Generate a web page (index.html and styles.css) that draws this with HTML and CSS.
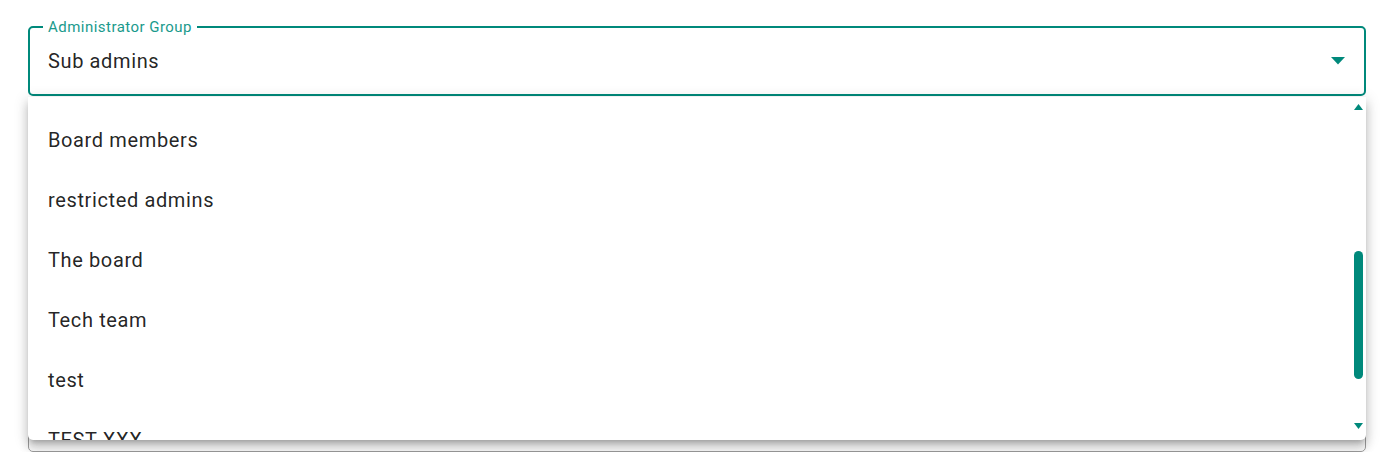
FILE: index.html
```html
<!DOCTYPE html>
<html lang="en">
<head>
<meta charset="utf-8"/>
<title>Administrator Group</title>
<link rel="stylesheet" href="styles.css">
</head>
<body>
<div class="form">
  <div class="field field-active">
    <span class="field-label">Administrator Group</span>
    <span class="field-value">Sub admins</span>
    <svg class="caret" width="14" height="8" viewBox="0 0 14 8"><path d="M0 0h14L7 7.5z" fill="#00897b"/></svg>
  </div>

  <div class="field field-idle"></div>

  <div class="menu">
    <ul class="menu-list">
      <li>Board members</li>
      <li>restricted admins</li>
      <li>The board</li>
      <li>Tech team</li>
      <li>test</li>
      <li>TEST XXX</li>
    </ul>
    <div class="scrollbar">
      <svg class="arrow" width="9" height="6" viewBox="0 0 9 6"><path d="M4.5 0L9 6H0z" fill="#00897b"/></svg>
      <div class="track"><div class="thumb"></div></div>
      <svg class="arrow" width="9" height="6" viewBox="0 0 9 6"><path d="M0 0h9L4.5 6z" fill="#00897b"/></svg>
    </div>
  </div>
</div>
</body>
</html>
```
FILE: styles.css
```css
body {
  margin: 0;
  font-family: Roboto, 'Liberation Sans', sans-serif;
  background-color: #fff;
  color: rgba(0, 0, 0, 0.87);
}
.form {
  position: relative;
  padding: 26px 25px 0 28px;
}
.field {
  position: relative;
  box-sizing: border-box;
  height: 70px;
  border-radius: 5px;
  display: flex;
  align-items: center;
  justify-content: space-between;
  padding: 0 18px;
}
.field-active {
  border: 2px solid #00897b;
}
.field-idle {
  margin-top: 286px;
  border: 1px solid #9e9e9e;
}
.field-label {
  position: absolute;
  top: -10px;
  left: 13px;
  padding: 0 5px;
  background-color: #fff;
  color: #1a9a8c;
  font-size: 15px;
  line-height: 18px;
  letter-spacing: 0.03125em;
}
.field-value {
  font-size: 20px;
  letter-spacing: 0.03125em;
}
.caret {
  margin-right: 1px;
}
.menu {
  position: absolute;
  top: 97px;
  left: 28px;
  right: 25px;
  height: 343px;
  display: flex;
  background-color: #fff;
  border-radius: 0 0 5px 5px;
  overflow: hidden;
  box-shadow: 0 5px 5px -3px rgba(0,0,0,0.2), 0 8px 10px 1px rgba(0,0,0,0.14), 0 3px 14px 2px rgba(0,0,0,0.12);
}
.menu-list {
  flex: 1;
  list-style: none;
  margin: 0;
  padding: 13px 0 0;
  overflow: hidden;
}
.menu-list li {
  height: 60px;
  display: flex;
  align-items: center;
  padding: 0 20px;
  font-size: 20px;
  letter-spacing: 0.03125em;
}
.scrollbar {
  width: 13px;
  display: flex;
  flex-direction: column;
  align-items: center;
  padding: 7px 1px 11px 0;
}
.track {
  flex: 1;
  width: 9px;
}
.thumb {
  margin-top: 141px;
  height: 128px;
  width: 9px;
  border-radius: 5px;
  background-color: #00897b;
}
```
